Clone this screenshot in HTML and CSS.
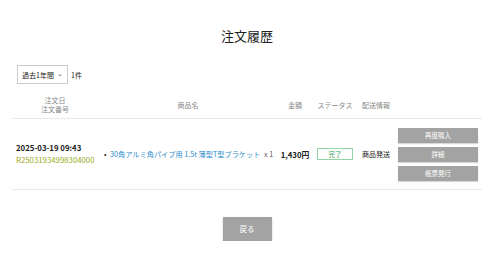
FILE: index.html
```html
<!DOCTYPE html>
<html lang="ja">
<head>
<meta charset="UTF-8">
<meta name="viewport" content="width=device-width, initial-scale=1.0">
<title>注文履歴</title>
<link rel="stylesheet" href="styles.css">
</head>
<body>
<div class="page">
	<h1 class="title">注文履歴</h1>

	<div class="filter">
		<div class="period"><span>過去1年間</span><span class="chev">&#8964;</span></div>
		<span class="count">1件</span>
	</div>

	<div class="history">
		<div class="row head">
			<div class="col">注文日<br>注文番号</div>
			<div class="col">商品名</div>
			<div class="col">金額</div>
			<div class="col">ステータス</div>
			<div class="col">配送情報</div>
			<div class="col"></div>
		</div>
		<div class="row item">
			<div class="col date">
				<div class="ordered">2025-03-19 09:43</div>
				<div class="number">R25031934998304000</div>
			</div>
			<div class="col goods">
				<span class="dot">•</span>
				<a href="#" class="goods-link">30角アルミ角パイプ用 1.5t 薄型T型ブラケット</a>
				<span class="qty">x 1</span>
			</div>
			<div class="col price">1,430円</div>
			<div class="col"><span class="status">完了</span></div>
			<div class="col ship">商品発送</div>
			<div class="col actions">
				<a href="#" class="btn">再度購入</a>
				<a href="#" class="btn">詳細</a>
				<a href="#" class="btn">帳票発行</a>
			</div>
		</div>
	</div>

	<div class="back-wrap">
		<a href="#" class="back">戻る</a>
	</div>
</div>
</body>
</html>
```

FILE: styles.css
```css
body {
	margin: 0;
	background: #fff;
	color: #333;
	font-family: "Noto Sans CJK JP", "Noto Sans", sans-serif;
}
.page {
	padding: 26px 18px 0 12px;
}
.title {
	margin: 0;
	font-size: 13px;
	font-weight: normal;
	line-height: 19px;
	text-align: center;
	color: #222;
}
/* 期間選択 */
.filter {
	display: flex;
	align-items: center;
	margin-top: 20px;
	padding-left: 5px;
	gap: 3px;
	font-size: 7px;
}
.period {
	box-sizing: border-box;
	width: 51px;
	height: 19px;
	border: 1px solid #ccc;
	display: flex;
	align-items: center;
	justify-content: space-between;
	padding: 0 4px;
	color: #222;
	white-space: nowrap;
}
.chev {
	font-size: 7px;
	color: #555;
	line-height: 6px;
	margin-top: -3px;
}
.count {
	color: #222;
}
/* 一覧 */
.row {
	display: grid;
	grid-template-columns: 86px 180px 34px 46px 36px 88px;
	border-bottom: 1px solid #e9e9e9;
	align-items: center;
}
.col {
	text-align: center;
}
.head {
	height: 26px;
	margin-top: 8px;
	font-size: 7px;
	line-height: 9px;
	color: #888;
}
.item {
	height: 70px;
	font-size: 7.5px;
	color: #222;
}
.date {
	text-align: left;
	padding-left: 4px;
	line-height: 12px;
}
.ordered {
	font-weight: bold;
	font-size: 7.8px;
}
.number {
	color: #9bab1c;
	font-size: 7.8px;
}
.goods {
	text-align: left;
	padding-left: 6px;
	font-size: 7.2px;
	white-space: nowrap;
}
.dot {
	margin-right: 2px;
}
.goods-link {
	color: #2b8ccc;
	text-decoration: none;
}
.qty {
	margin-left: 2px;
	color: #555;
}
.price {
	font-weight: bold;
	font-size: 7.8px;
}
.status {
	display: inline-block;
	box-sizing: border-box;
	width: 36px;
	height: 12px;
	line-height: 10px;
	border: 1px solid #93d3a4;
	color: #3fa35a;
	font-size: 6.5px;
}
.ship {
	font-size: 7px;
}
.actions {
	display: flex;
	flex-direction: column;
	align-items: center;
	gap: 4px;
}
.btn {
	display: block;
	width: 80px;
	height: 15px;
	line-height: 15px;
	background: #a3a3a3;
	color: #fff;
	font-size: 6.5px;
	text-decoration: none;
	box-shadow: 0 1px 1px rgba(0, 0, 0, 0.15);
}
.back-wrap {
	display: flex;
	justify-content: center;
	margin-top: 27px;
}
.back {
	display: block;
	width: 49px;
	height: 24px;
	line-height: 24px;
	text-align: center;
	background: #a3a3a3;
	color: #fff;
	font-size: 7.5px;
	text-decoration: none;
	box-shadow: 0 1px 2px rgba(0, 0, 0, 0.2);
}
```
